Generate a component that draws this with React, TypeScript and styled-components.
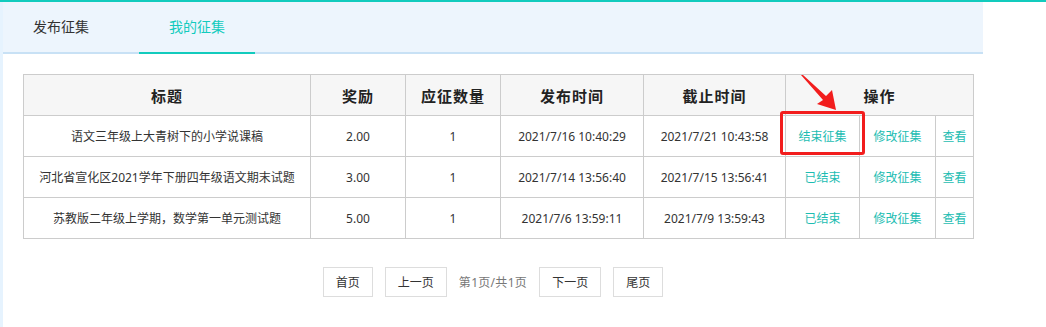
import React from "react";
import styled, { createGlobalStyle } from "styled-components";

const GlobalStyle = createGlobalStyle`
  html, body {
    margin: 0;
    padding: 0;
    background: #ffffff;
    font-family: "Noto Sans", "Noto Sans CJK SC", sans-serif;
    color: #333333;
  }
  * { box-sizing: border-box; }
`;

const TEAL = "#12cbbd";
const LINK = "#1dbdb2";

const Page = styled.div`
  position: relative;
  width: 1046px;
  height: 327px;
  overflow: hidden;
  display: flex;
  flex-direction: column;
`;

const TopBar = styled.div`
  height: 2px;
  background: ${TEAL};
  flex: none;
`;

const Main = styled.div`
  flex: 1;
  display: flex;
`;

const LeftStrip = styled.div`
  width: 3px;
  background: #e6f3fe;
  flex: none;
`;

const Content = styled.div`
  width: 980px;
  display: flex;
  flex-direction: column;
`;

const TabBar = styled.div`
  height: 52px;
  background: #edf5fd;
  border-bottom: 2px solid #c8e1f5;
  display: flex;
`;

const Tab = styled.div<{ $active?: boolean }>`
  padding: 0 30px;
  height: 52px;
  line-height: 50px;
  font-size: 14px;
  color: ${(p) => (p.$active ? TEAL : "#333333")};
  border-bottom: 2px solid ${(p) => (p.$active ? TEAL : "transparent")};
  margin-bottom: -2px;
  & + & {
    margin-left: 20px;
  }
`;

const Body = styled.div`
  padding: 20px 10px 0 20px;
`;

const Table = styled.table`
  width: 950px;
  border-collapse: collapse;
  table-layout: fixed;
  border: 1px solid #cccccc;
`;

const Th = styled.th`
  height: 41px;
  background: #f6f6f6;
  border: 1px solid #cccccc;
  font-size: 15px;
  font-weight: bold;
  color: #222222;
  text-align: center;
  padding: 0;
  letter-spacing: 1px;
`;

const Td = styled.td`
  height: 41px;
  border: 1px solid #cccccc;
  font-size: 12px;
  color: #333333;
  text-align: center;
  padding: 0;
  white-space: nowrap;
`;

const Link = styled.span`
  color: ${LINK};
  font-size: 12px;
`;

const Pager = styled.div`
  margin: 28px -10px 0 -20px;
  display: flex;
  justify-content: center;
  align-items: center;
  gap: 12px;
`;

const PageButton = styled.div<{ $w: number }>`
  width: ${(p) => p.$w}px;
  height: 30px;
  border: 1px solid #dddddd;
  display: flex;
  align-items: center;
  justify-content: center;
  font-size: 12px;
  color: #333333;
  background: #ffffff;
`;

const PageInfo = styled.span`
  font-size: 12px;
  color: #777777;
  letter-spacing: 0.3px;
`;

const RedBox = styled.div`
  position: absolute;
  left: 780px;
  top: 111px;
  width: 85px;
  height: 44px;
  border: 3px solid #f21d1d;
  border-radius: 3px;
  pointer-events: none;
`;

const Arrow = styled.svg`
  position: absolute;
  left: 0;
  top: 0;
  pointer-events: none;
`;

const rows = [
  {
    title: "语文三年级上大青树下的小学说课稿",
    reward: "2.00",
    count: "1",
    start: "2021/7/16 10:40:29",
    end: "2021/7/21 10:43:58",
    status: "结束征集",
  },
  {
    title: "河北省宣化区2021学年下册四年级语文期末试题",
    reward: "3.00",
    count: "1",
    start: "2021/7/14 13:56:40",
    end: "2021/7/15 13:56:41",
    status: "已结束",
  },
  {
    title: "苏教版二年级上学期，数学第一单元测试题",
    reward: "5.00",
    count: "1",
    start: "2021/7/6 13:59:11",
    end: "2021/7/9 13:59:43",
    status: "已结束",
  },
];

const widths = [287, 95, 95, 143, 142, 74, 76, 38];

export default function App() {
  return (
    <>
      <GlobalStyle />
      <Page>
        <TopBar />
        <Main>
          <LeftStrip />
          <Content>
            <TabBar>
              <Tab>发布征集</Tab>
              <Tab $active>我的征集</Tab>
            </TabBar>
            <Body>
              <Table>
                <colgroup>
                  {widths.map((w, i) => (
                    <col key={i} style={{ width: w }} />
                  ))}
                </colgroup>
                <thead>
                  <tr>
                    <Th>标题</Th>
                    <Th>奖励</Th>
                    <Th>应征数量</Th>
                    <Th>发布时间</Th>
                    <Th>截止时间</Th>
                    <Th colSpan={3}>操作</Th>
                  </tr>
                </thead>
                <tbody>
                  {rows.map((r) => (
                    <tr key={r.title}>
                      <Td>{r.title}</Td>
                      <Td>{r.reward}</Td>
                      <Td>{r.count}</Td>
                      <Td>{r.start}</Td>
                      <Td>{r.end}</Td>
                      <Td>
                        <Link>{r.status}</Link>
                      </Td>
                      <Td>
                        <Link>修改征集</Link>
                      </Td>
                      <Td>
                        <Link>查看</Link>
                      </Td>
                    </tr>
                  ))}
                </tbody>
              </Table>
              <Pager>
                <PageButton $w={50}>首页</PageButton>
                <PageButton $w={62}>上一页</PageButton>
                <PageInfo>第1页/共1页</PageInfo>
                <PageButton $w={62}>下一页</PageButton>
                <PageButton $w={50}>尾页</PageButton>
              </Pager>
            </Body>
          </Content>
        </Main>
        <RedBox />
        <Arrow width="1046" height="327" viewBox="0 0 1046 327">
          <polygon
            points="801,75 803,75 826,96 832,90 836,110 817,104 823,100"
            fill="#f21d1d"
          />
        </Arrow>
      </Page>
    </>
  );
}
